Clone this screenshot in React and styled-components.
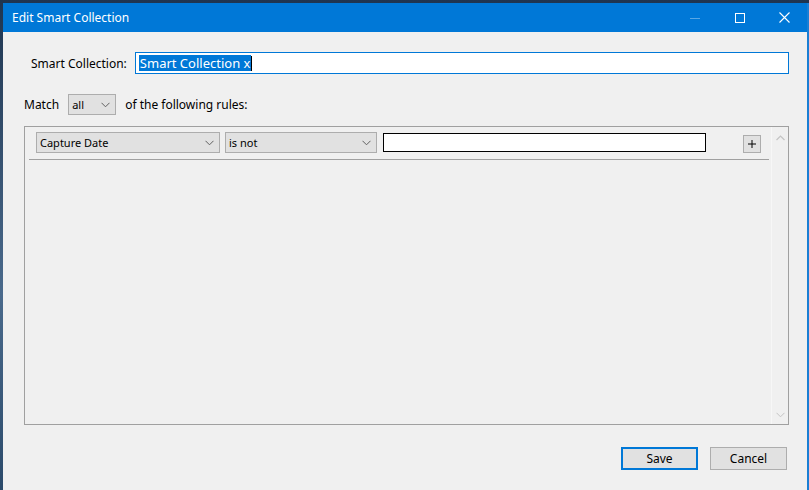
import React from "react";
import styled, { createGlobalStyle } from "styled-components";

const Global = createGlobalStyle`
  html, body { margin: 0; padding: 0; width: 809px; height: 490px; overflow: hidden; }
  body { font-family: "Noto Sans", "Open Sans", Arial, sans-serif; font-size: 12px; color: #000; }
  * { box-sizing: border-box; }
`;

const Desktop = styled.div`
  width: 809px;
  height: 490px;
  background: linear-gradient(180deg, #1f3550 0%, #4a6a8c 60%, #2b4a6a 100%);
  padding: 3px 0 0 3px;
  display: flex;
`;

const Window = styled.div`
  flex: 1;
  display: flex;
  flex-direction: column;
  background: #f0f0f0;
  border-right: 2px solid #1a7fd4;
`;

const TitleBar = styled.div`
  height: 29px;
  background: #0078d7;
  color: #fff;
  display: flex;
  align-items: center;
  padding-left: 9px;
  font-size: 12px;
`;

const Title = styled.div`
  flex: 1;
  margin-top: -1px;
`;

const Controls = styled.div`
  display: flex;
  height: 100%;
`;

const CtrlBtn = styled.div`
  width: 45px;
  height: 100%;
  display: flex;
  align-items: center;
  justify-content: center;
  opacity: ${(p) => (p.$disabled ? 0.35 : 1)};
`;

const Body = styled.div`
  flex: 1;
  display: flex;
  flex-direction: column;
  padding: 20px 18px 0 21px;
`;

const NameRow = styled.div`
  display: flex;
  align-items: center;
  padding-left: 7px;
  gap: 8px;
`;

const Label = styled.span`
  white-space: nowrap;
`;

const NameInput = styled.div`
  flex: 1;
  height: 22px;
  border: 1px solid #0078d7;
  background: #fff;
  display: flex;
  align-items: center;
  padding-left: 3px;
`;

const Selected = styled.span`
  background: #0078d7;
  color: #fff;
  font-size: 13px;
  line-height: 16px;
  padding: 0 1px;
`;

const Caret = styled.span`
  display: inline-block;
  width: 1px;
  height: 15px;
  background: #000;
`;

const MatchRow = styled.div`
  display: flex;
  align-items: center;
  margin-top: 20px;
  gap: 9px;
`;

const Select = styled.div`
  width: ${(p) => p.$w}px;
  height: ${(p) => p.$h || 20}px;
  background: #e1e1e1;
  border: 1px solid #adadad;
  display: flex;
  align-items: center;
  justify-content: space-between;
  padding: 0 5px 0 3px;
  font-size: 11px;
`;

const Chevron = ({ color = "#606060" }) => (
  <svg width="9" height="6" viewBox="0 0 9 6">
    <path d="M0.5 0.8 L4.5 4.8 L8.5 0.8" fill="none" stroke={color} strokeWidth="1" />
  </svg>
);

const RulesBox = styled.div`
  margin-top: 11px;
  height: 299px;
  border: 1px solid #a0a0a0;
  display: flex;
`;

const RulesList = styled.div`
  flex: 1;
  padding: 5px 0 0 4px;
`;

const RuleRow = styled.div`
  display: flex;
  align-items: center;
  height: 28px;
  padding: 0 0 6px 7px;
  border-bottom: 1px solid #a0a0a0;
  gap: 5px;
`;

const TextField = styled.div`
  width: 323px;
  height: 19px;
  margin-left: 1px;
  border: 1px solid #000;
  background: #fff;
`;

const Spacer = styled.div`
  flex: 1;
`;

const PlusBtn = styled.div`
  width: 18px;
  height: 18px;
  border: 1px solid #adadad;
  background: #e1e1e1;
  display: flex;
  align-items: center;
  justify-content: center;
  margin-right: 8px;
  margin-top: 2px;
`;

const ScrollBar = styled.div`
  width: 17px;
  margin-left: 2px;
  border-left: 1px solid #f7f7f7;
  display: flex;
  flex-direction: column;
  justify-content: space-between;
  align-items: center;
  padding: 8px 0 6px;
`;

const Footer = styled.div`
  display: flex;
  justify-content: flex-end;
  gap: 12px;
  margin-top: 22px;
  padding-right: 2px;
`;

const Button = styled.div`
  width: 77px;
  height: 23px;
  background: #e1e1e1;
  border: ${(p) => (p.$default ? "2px solid #0078d7" : "1px solid #adadad")};
  display: flex;
  align-items: center;
  justify-content: center;
  font-size: 12px;
`;

export default function App() {
  return (
    <>
      <Global />
      <Desktop>
        <Window>
          <TitleBar>
            <Title>Edit Smart Collection</Title>
            <Controls>
              <CtrlBtn $disabled>
                <svg width="10" height="10" viewBox="0 0 10 10">
                  <path d="M0 5.5 H10" stroke="#fff" strokeWidth="1" />
                </svg>
              </CtrlBtn>
              <CtrlBtn>
                <svg width="10" height="10" viewBox="0 0 10 10">
                  <rect x="0.5" y="0.5" width="9" height="9" fill="none" stroke="#fff" strokeWidth="1" />
                </svg>
              </CtrlBtn>
              <CtrlBtn>
                <svg width="11" height="11" viewBox="0 0 11 11">
                  <path d="M0.5 0.5 L10.5 10.5 M10.5 0.5 L0.5 10.5" stroke="#fff" strokeWidth="1.1" />
                </svg>
              </CtrlBtn>
            </Controls>
          </TitleBar>
          <Body>
            <NameRow>
              <Label>Smart Collection:</Label>
              <NameInput>
                <Selected>Smart Collection x</Selected>
                <Caret />
              </NameInput>
            </NameRow>
            <MatchRow>
              <Label>Match</Label>
              <Select $w={48} $h={21}>
                <span>all</span>
                <Chevron />
              </Select>
              <Label>of the following rules:</Label>
            </MatchRow>
            <RulesBox>
              <RulesList>
                <RuleRow>
                  <Select $w={184} $h={21}>
                    <span>Capture Date</span>
                    <Chevron />
                  </Select>
                  <Select $w={152} $h={21}>
                    <span>is not</span>
                    <Chevron />
                  </Select>
                  <TextField />
                  <Spacer />
                  <PlusBtn>
                    <svg width="8" height="8" viewBox="0 0 8 8">
                      <path d="M4 0 V8 M0 4 H8" stroke="#000" strokeWidth="1" />
                    </svg>
                  </PlusBtn>
                </RuleRow>
              </RulesList>
              <ScrollBar>
                <svg width="9" height="6" viewBox="0 0 9 6">
                  <path d="M0.5 5 L4.5 1 L8.5 5" fill="none" stroke="#c4c4c4" strokeWidth="1.2" />
                </svg>
                <Chevron color="#c4c4c4" />
              </ScrollBar>
            </RulesBox>
            <Footer>
              <Button $default>Save</Button>
              <Button>Cancel</Button>
            </Footer>
          </Body>
        </Window>
      </Desktop>
    </>
  );
}
